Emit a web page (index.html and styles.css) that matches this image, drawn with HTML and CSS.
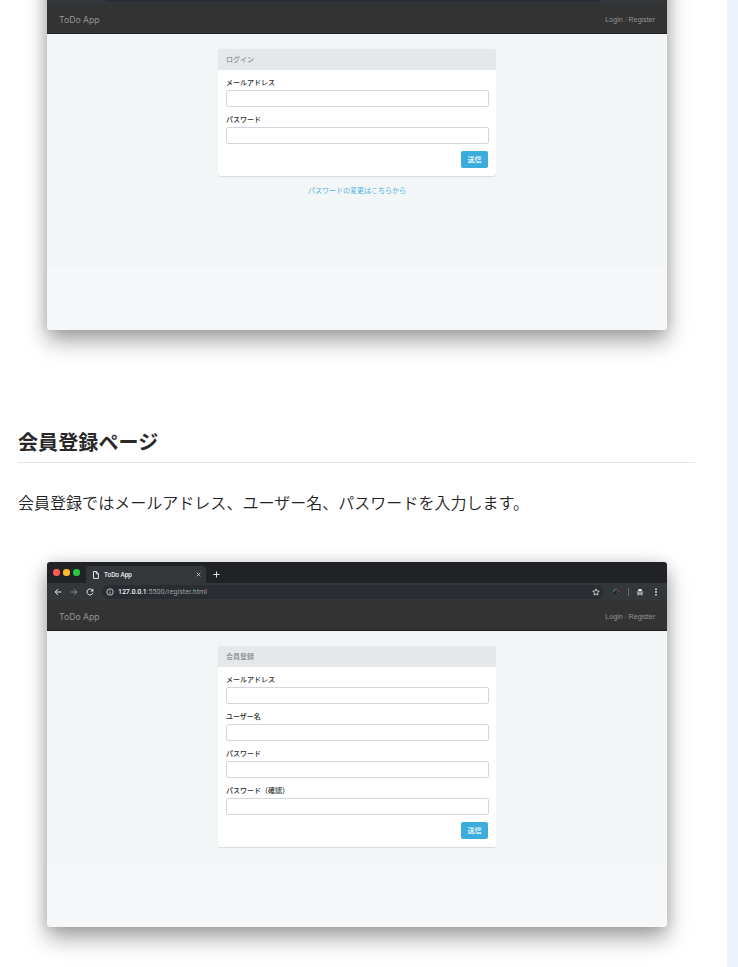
FILE: index.html
```html
<!DOCTYPE html>
<html lang="ja">
<head>
<meta charset="utf-8">
<title>ToDo App</title>
<link rel="stylesheet" href="styles.css">
</head>
<body>
<main class="article">
  <section class="browser browser-top">
    <div class="tabs"></div>
    <div class="toolbar"><div class="address"></div><div class="tools"></div></div>
    <nav class="navbar"><span class="brand">ToDo App</span><span class="links">Login <i>/</i> Register</span></nav>
    <div class="page">
      <form class="card">
        <div class="card-head">ログイン</div>
        <div class="card-body">
          <label>メールアドレス</label><div class="input"></div>
          <label>パスワード</label><div class="input"></div>
          <div class="actions"><span class="button">送信</span></div>
        </div>
      </form>
      <a class="reset">パスワードの変更はこちらから</a>
    </div>
  </section>

  <h2>会員登録ページ</h2>
  <p>会員登録ではメールアドレス、ユーザー名、パスワードを入力します。</p>

  <section class="browser">
    <div class="tabs">
      <span class="dot red"></span><span class="dot yellow"></span><span class="dot green"></span>
      <div class="tab">
        <svg class="doc" viewBox="0 0 6 8"><path d="M.5 .5H3.4L5.5 2.6V7.4H.5ZM3.3 .5V2.8H5.5"/></svg>
        <span class="tab-title">ToDo App</span>
        <svg class="close" viewBox="0 0 5 5"><path d="M.7 .7 4.3 4.3M4.3 .7 .7 4.3"/></svg>
      </div>
      <svg class="plus" viewBox="0 0 7 7"><path d="M3.5 .5V6.5M.5 3.5H6.5"/></svg>
    </div>
    <div class="toolbar">
      <svg class="nav-icon" viewBox="0 0 8 8"><path d="M7.2 4H1.2M4 1.1 1.1 4 4 6.9"/></svg>
      <svg class="nav-icon dim" viewBox="0 0 8 8"><path d="M.8 4H6.8M4 1.1 6.9 4 4 6.9"/></svg>
      <svg class="nav-icon" viewBox="0 0 8 8"><path d="M6.5 2.3A3 3 0 1 0 6.9 4.7"/><path class="solid" d="M7.4 .6V3.6H4.4Z"/></svg>
      <div class="address">
        <svg class="info" viewBox="0 0 8 8"><circle cx="4" cy="4" r="3.2"/><path d="M4 3.6V5.8M4 2.1V2.9"/></svg>
        <span class="url"><b>127.0.0.1</b>:5500/register.html</span>
        <svg class="star" viewBox="0 0 8 8"><path d="M4 .8 4.9 3 7.3 3.2 5.5 4.8 6 7.1 4 5.9 2 7.1 2.5 4.8 .7 3.2 3.1 3Z"/></svg>
      </div>
      <div class="tools">
        <svg class="ext" viewBox="0 0 8 8"><circle cx="4" cy="4" r="3.3" fill="#202326" stroke="#555a60" stroke-width=".5"/><path d="M1.6 4A2.4 2.4 0 0 1 4 1.6" stroke="#24a77a"/><path d="M4 1.8A2.3 2.3 0 0 1 6.2 4" stroke="#a94551"/><path d="M4 4.2 5.6 5.4" stroke="#3c6fb5"/></svg>
        <span class="divider"></span>
        <svg class="incognito" viewBox="0 0 8 8"><path class="solid" d="M2.5 1H5.5L6 3.1H2Z"/><path d="M.8 4H7.2M3.2 5.9H4.8" stroke-width=".8"/><circle cx="2.4" cy="6" r=".9" stroke-width=".8"/><circle cx="5.6" cy="6" r=".9" stroke-width=".8"/></svg>
        <svg class="menu" viewBox="0 0 2 8"><circle cx="1" cy="1.2" r=".9"/><circle cx="1" cy="4" r=".9"/><circle cx="1" cy="6.8" r=".9"/></svg>
      </div>
    </div>
    <nav class="navbar"><span class="brand">ToDo App</span><span class="links">Login <i>/</i> Register</span></nav>
    <div class="page">
      <form class="card">
        <div class="card-head">会員登録</div>
        <div class="card-body">
          <label>メールアドレス</label><div class="input"></div>
          <label>ユーザー名</label><div class="input"></div>
          <label>パスワード</label><div class="input"></div>
          <label>パスワード（確認）</label><div class="input"></div>
          <div class="actions"><span class="button">送信</span></div>
        </div>
      </form>
    </div>
  </section>
</main>
</body>
</html>
```
FILE: styles.css
```css
* { box-sizing: border-box; }
html { height: 967px; overflow: hidden; }
body {
  margin: 0;
  height: 967px;
  overflow: hidden;
  background: #edf1fa;
  font-family: "Liberation Sans", "Noto Sans CJK JP", sans-serif;
}
.article {
  display: flow-root;
  width: 727px;
  height: 967px;
  padding: 0 32px 0 18px;
  overflow: hidden;
  background: #fff;
}
.browser {
  display: flex;
  flex-direction: column;
  width: 620px;
  height: 365px;
  margin-left: 29px;
  border-radius: 3px;
  background: #f5f7f9;
  box-shadow: 0 11px 22px rgba(0, 0, 0, .36), 0 0 14px rgba(0, 0, 0, .12);
}
.browser-top { margin-top: -35px; }
h2 {
  height: 42px;
  margin: 91px 0 0;
  border-bottom: 1px solid #e5e5e5;
  color: #292929;
  font: 700 20px/42px "Noto Sans CJK JP", sans-serif;
  letter-spacing: .1px;
}
p {
  margin: 27px 0 48px;
  color: #222;
  font: 350 16px/24px "Noto Sans CJK JP", sans-serif;
  letter-spacing: .03px;
}
svg { display: block; flex: none; fill: none; stroke: #e4e6e8; stroke-width: 1; }
.solid { fill: #e4e6e8; stroke: none; }

.tabs {
  display: flex;
  align-items: center;
  height: 21px;
  padding-left: 6px;
  border-radius: 3px 3px 0 0;
  background: #202226;
}
.dot { width: 6.5px; height: 6.5px; margin-right: 3.5px; border-radius: 50%; }
.red { background: #ff5c54; }
.yellow { background: #ffbb2c; }
.green { background: #27ca40; }
.tab {
  display: flex;
  align-items: center;
  align-self: flex-end;
  width: 120px;
  height: 17px;
  margin-left: 3px;
  padding: 0 5px 0 7px;
  border-radius: 4px 4px 0 0;
  background: #33373a;
}
.doc { width: 6px; height: 8px; }
.tab-title { margin: 0 auto 0 5px; color: #e8eaed; font: 6.4px/10px Roboto, sans-serif; -webkit-text-stroke: .15px; }
.close { width: 5px; height: 5px; stroke-width: .7; }
.plus { width: 7px; height: 7px; margin: 3px 0 0 7px; }
.toolbar {
  display: flex;
  align-items: center;
  height: 18px;
  padding-left: 7px;
  background: #33373a;
}
.nav-icon { width: 8px; height: 8px; margin-right: 8px; }
.dim { stroke: #85898d; }
.address {
  display: flex;
  align-items: center;
  width: 502px;
  height: 14px;
  padding: 0 4px;
  border-radius: 7px;
  background: #292c30;
}
.browser-top .address { margin-left: 48px; }
.info { width: 8px; height: 8px; stroke-width: .8; }
.url { margin: 0 auto 0 4px; color: #9ca0a4; font: 7.1px/10px Roboto, sans-serif; }
.url b { color: #f0f1f2; font-weight: 500; letter-spacing: -.15px; }
.star { width: 8px; height: 8px; stroke-width: .8; }
.tools { display: flex; align-items: center; }
.ext { width: 8px; height: 8px; margin-left: 8px; }
.divider { width: 1px; height: 8px; margin: 0 7px 0 8px; background: #686c70; }
.incognito { width: 8px; height: 8px; margin-right: 11px; }
.menu { width: 2px; height: 8px; fill: #e4e6e8; stroke: none; }

.navbar {
  display: flex;
  align-items: center;
  justify-content: space-between;
  height: 30px;
  padding: 2px 12px 0;
  border-bottom: 1px solid #211c21;
  background: #333;
  color: #949494;
}
.brand { padding-top: 1px; font: 8.7px/14px Inter, sans-serif; }
.links { font-size: 7.1px; line-height: 10px; }
.links i { color: #555; }
.page {
  height: 233px;
  padding-top: 15px;
  background: #f2f6f7;
  text-align: center;
}
.card {
  width: 278px;
  margin: 0 auto;
  overflow: hidden;
  border-radius: 3px;
  background: #fff;
  box-shadow: 0 .5px 1px #d5dadd;
  text-align: left;
}
.card-head {
  height: 21px;
  padding-left: 8px;
  background: #e4e8eb;
  color: #777b7e;
  font-size: 7px;
  line-height: 21px;
}
.card-body { padding: 6px 8px 8px; }
label {
  display: block;
  height: 14px;
  color: #292d32;
  font-size: 7px;
  font-weight: 500;
  line-height: 12px;
  font-family: "Noto Sans CJK JP", sans-serif;
}
.input {
  width: 263px;
  height: 17px;
  margin-bottom: 6px;
  border: 1px solid #d3d6dc;
  border-radius: 2px;
  background: #fff;
}
.actions { display: flex; justify-content: flex-end; margin-top: 7px; }
.button {
  width: 27px;
  height: 17px;
  border-radius: 2px;
  background: #3aaddc;
  color: #fff;
  font: 500 7px/17px "Noto Sans CJK JP", sans-serif;
  text-align: center;
}
.reset {
  display: block;
  margin-top: 8px;
  color: #4db4df;
  font: 7px/12px "Noto Sans CJK JP", sans-serif;
}
```
